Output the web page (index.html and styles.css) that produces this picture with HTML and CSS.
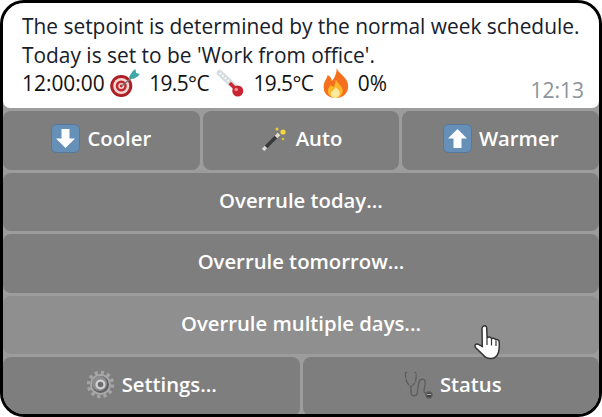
FILE: index.html
```html
<!DOCTYPE html>
<html lang="en">
<head>
<meta charset="utf-8">
<title>Thermostat</title>
<link rel="stylesheet" href="styles.css">
</head>
<body>
<div class="shell">
  <div class="message">
    <p class="line">The setpoint is determined by the normal week schedule.</p>
    <p class="line">Today is set to be 'Work from office'.</p>
    <p class="line status">12:00:00
      <svg class="emoji" viewBox="2 0 30 30"><defs><radialGradient id="tg"><stop offset="0" stop-color="#e8474c"/><stop offset="1" stop-color="#a5191f"/></radialGradient></defs><circle cx="11.500" cy="18" r="11" fill="url(#tg)"/><circle cx="11.500" cy="18" r="8" fill="#f0d8d5"/><circle cx="11.500" cy="18" r="5.5" fill="#c5282d"/><circle cx="11.500" cy="18" r="3" fill="#f0d8d5"/><circle cx="11.500" cy="18" r="1.4" fill="#c5282d"/><path d="M12 18 24 8" stroke="#777" stroke-width="1.6"/><path d="M19 9.500 23 3l2.500-2 1 4L30 6l-2 2.500-4.500 2.500z" fill="#3fa7a8"/></svg>
      <span class="temp">19.5°C</span>
      <svg class="emoji" viewBox="0 0 30 30"><path d="M4 5 19 19" stroke="#d5dde2" stroke-width="6" stroke-linecap="round"/><path d="M4 5 19 19" stroke="#fff" stroke-width="2" stroke-dasharray="1.500 2"/><path d="M14 15 20 21" stroke="#c92a35" stroke-width="3.500"/><circle cx="22" cy="23" r="5.500" fill="#c9242f"/><circle cx="20.500" cy="21.500" r="1.800" fill="#ef8a8f"/></svg>
      <span class="temp">19.5°C</span>
      <svg class="emoji" viewBox="0 0 30 30"><path d="M16 0c1 5 9 8 11 15 2 9-4 15-12 15S2 25 3 17c.5-4 3-6 4-10 2 1 4 3 4 6 3-3 5-8 5-13z" fill="#f4701f"/><path d="M15 11c1 4 7 7 7 12 0 3.500-3 7-7 7s-8-3-8-7c0-3 2-4 3-6 1 1 2 2 3 2 1-2 2-5 2-8z" fill="#fbb62c"/><path d="M15 19c1 2 4 3 4 6 0 2-2 5-4.500 5S10 28 10 25.500c0-2.500 4-3.500 5-6.500z" fill="#fdeaa0"/></svg>
      0%</p>
    <span class="time">12:13</span>
  </div>
  <div class="keyboard">
    <div class="row">
      <button class="key">
        <svg class="icon" viewBox="0 0 29 29"><rect x=".5" y=".5" width="28" height="28" rx="5" fill="#6690b8" stroke="#54799c"/><path d="M10.500 5h8v9.500H24L14.500 24 5 14.500h5.500z" fill="#fff"/></svg>
        Cooler</button>
      <button class="key">
        <svg class="icon" viewBox="0 0 29 29"><path d="M3 26 18 11" stroke="#3a3a3a" stroke-width="3.500"/><path d="M3 26 6 23" stroke="#ddd" stroke-width="3.500"/><path d="M16 13 19 10" stroke="#e5e0cc" stroke-width="3.500"/><circle cx="23" cy="8" r="2.600" fill="#f3d83b"/><circle cx="17" cy="5" r="1.500" fill="#e8cf3a"/><circle cx="23" cy="15" r="1.300" fill="#d9c23a"/></svg>
        Auto</button>
      <button class="key">
        <svg class="icon" viewBox="0 0 29 29"><rect x=".5" y=".5" width="28" height="28" rx="5" fill="#6690b8" stroke="#54799c"/><path d="M10.500 24h8v-9.500H24L14.500 5 5 14.500h5.500z" fill="#fff"/></svg>
        Warmer</button>
    </div>
    <button class="key">Overrule today...</button>
    <button class="key">Overrule tomorrow...</button>
    <button class="key key-hover">Overrule multiple days...</button>
    <div class="row">
      <button class="key">
        <svg class="icon" viewBox="0 0 29 29"><circle cx="14.500" cy="14.500" r="12" fill="none" stroke="#a4a4a4" stroke-width="3.500" stroke-dasharray="3.200 3.083"/><circle cx="14.500" cy="14.500" r="10.500" fill="#a8a8a8"/><circle cx="14.500" cy="14.500" r="8.500" fill="#606063"/><circle cx="13.500" cy="13.500" r="7.500" fill="#8d8d90"/><circle cx="14.500" cy="14.500" r="5" fill="#d2d2d2"/><circle cx="14.500" cy="14.500" r="2.800" fill="#6c6c6f"/></svg>
        Settings...</button>
      <button class="key key-shift">
        <svg class="icon" viewBox="0 0 29 29" fill="none" stroke="#5c5c5c" stroke-width="1.300"><path d="M3 2 1.500 3C1 9 3 15 7 16.500 11 15 13 9 12 3L10.500 2" stroke-dasharray="7 1"/><path d="M7 16.500V23c0 3 5 4 6 1 1-4 1-8 2-12 .5-3 5-4 6-1 1 3-1 7-1 10 0 2 2 3 4 2"/><circle cx="25" cy="25" r="3" fill="#444"/><path d="M23 24.500h4" stroke="#ccc" stroke-width=".8"/></svg>
        Status</button>
    </div>
  </div>
  <svg class="cursor" viewBox="0 0 29 37"><path d="M10 2.500c1.500-1.500 3.500-1 3.700 1.500l.4 9.500c2-.8 3.700-.3 4.500 1 1.600-.6 3.200-.3 4 1 1.800-.4 3.400.5 3.600 2.500.2 4 .2 8-1 11-1 3-3.500 5.500-7.500 5.500-3 0-5.500-1-7.500-3.500L2.500 23.500c-1.500-2 0-4 2.500-3.300l4.300 2.300L9 4.500c0-.8.400-1.500 1-2z" fill="#fff" stroke="#333" stroke-width="1.500"/><path d="M14 14v7M18.500 15v6.500M23 16.500v5.500" stroke="#333" stroke-width="1.200" fill="none"/></svg>
</div>
</body>
</html>
```
FILE: styles.css
```css
* { box-sizing: border-box; }
html, body { margin: 0; padding: 0; background: #fff; }
.shell {
  position: relative;
  width: 602px;
  height: 417px;
  overflow: hidden;
  background: #9c9c9c;
  border: 3px solid #000;
  border-radius: 24px;
  font-family: "Open Sans", sans-serif;
}
.message {
  position: relative;
  height: 105px;
  padding: 9px 19px 0;
  background: #fff;
  border-radius: 0 0 7px 7px;
  color: #17202b;
  font-size: 20.9px;
  line-height: 28.5px;
}
.line { margin: 0; height: 28.5px; white-space: nowrap; }
.status { color: #111; display: flex; align-items: center; gap: 5.5px; }
.temp { letter-spacing: -0.6px; }
.emoji { width: 33.5px; height: 30px; flex: none; margin: -1px 0; }
.time {
  position: absolute;
  right: 15px;
  bottom: 4px;
  color: #8c939b;
  font-size: 21px;
  line-height: 28px;
}
.keyboard {
  display: flex;
  flex-direction: column;
  gap: 3px;
  padding-top: 3px;
}
.row {
  display: grid;
  grid-auto-flow: column;
  grid-auto-columns: minmax(0, 1fr);
  gap: 3px;
  height: 58.5px;
  flex: none;
}
.key {
  flex: none;
  display: flex;
  align-items: center;
  justify-content: center;
  gap: 7px;
  height: 58.5px;
  padding: 0 0 4px;
  border: 0;
  border-radius: 8px;
  background: #7e7e7e;
  color: #fff;
  font-family: inherit;
  font-size: 20.3px;
  font-weight: 600;
}
.key-shift { padding-left: 4px; }
.key-hover { background: #8f8f8f; }
.icon { width: 29px; height: 29px; flex: none; }
.cursor {
  position: absolute;
  left: 470px;
  top: 321px;
  width: 29px;
  height: 37px;
}
```
